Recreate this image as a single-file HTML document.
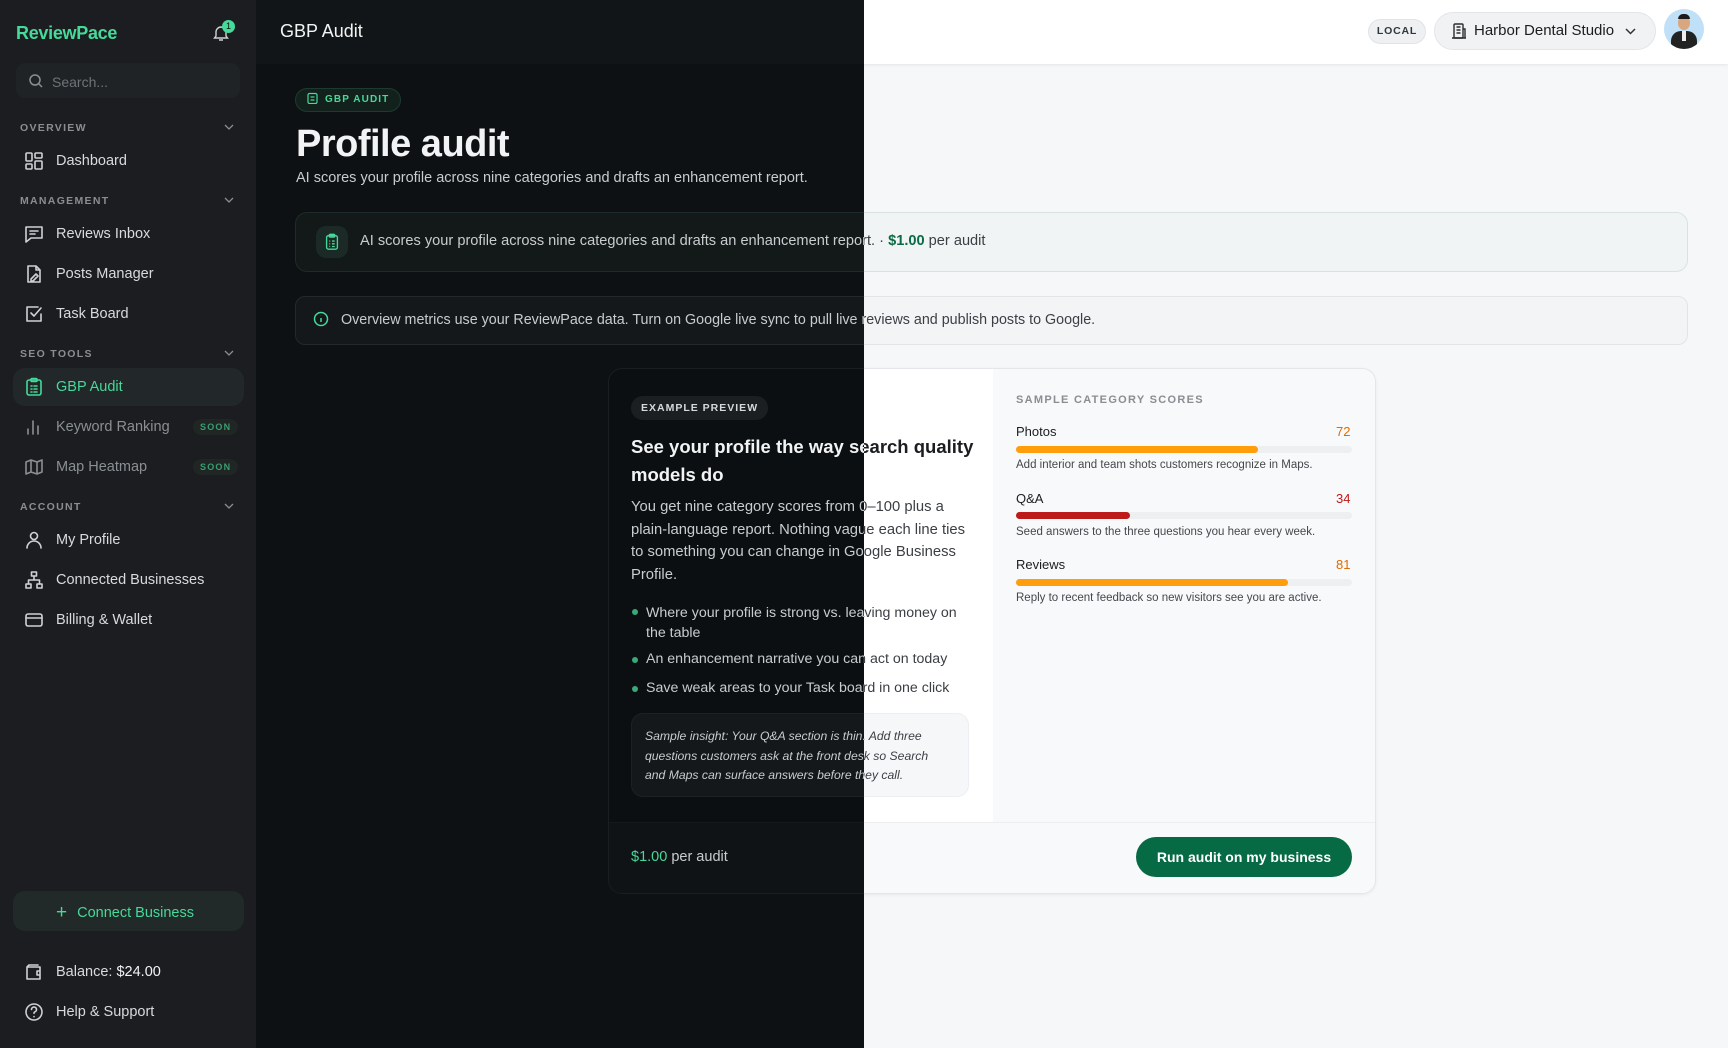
<!DOCTYPE html>
<html><head><meta charset="utf-8">
<style>
*{box-sizing:border-box;margin:0;padding:0}
html,body{width:1728px;height:1048px;overflow:hidden;font-family:"Liberation Sans",sans-serif}
.layer{position:absolute;left:0;top:0;width:1728px;height:1048px;overflow:hidden;background:var(--bg);color:var(--text)}
.light{--bg:#f6f7f9;--hdr:#ffffff;--text:#1b1d20;--muted:#3b3f44;--b1:#f1f4f4;--b1b:#d9e2e0;--b2:#f3f4f6;--b2b:#e2e5e8;--card:#ffffff;--cardb:#e4e6e9;--right:#f8f9fa;--foot:#f8f9fa;--green:#0b6b45;--pill:#eceef0;--ins:#f6f7f9;--track:#eeeff1;--icb:#e3efe9}
.dark{--bg:#0e1113;--hdr:#121517;--text:#f2f3f4;--muted:#c9ccce;--b1:#131819;--b1b:#1f2b28;--b2:#15181a;--b2b:#24282b;--card:#0c0f11;--cardb:#1a1e21;--right:#0c0f11;--foot:#101315;--green:#45d99a;--pill:#1c1f22;--ins:#15181b;--track:#222;--icb:#1b2a26;clip-path:inset(0 864px 0 0)}
.abs{position:absolute}
.hdr{left:256px;top:0;width:1472px;height:64px;background:var(--hdr);box-shadow:0 1px 3px rgba(0,0,0,.08)}
.side{left:0;top:0;width:256px;height:1048px;background:#1b1d20}
.nav{position:absolute;left:24px;display:flex;align-items:center;font-size:14.5px;color:#d8dadc;height:24px;width:230px}
.nav svg{width:20px;height:20px;margin-right:12px;fill:none;stroke:#cfd2d4;stroke-width:1.6;stroke-linecap:round;stroke-linejoin:round}
.sec{position:absolute;left:20px;font-size:10.5px;letter-spacing:1.3px;color:#8a8e92;font-weight:bold}
.chev{position:absolute;left:224px;width:10px;height:6px}
.soon{position:absolute;left:169px;font-size:9px;letter-spacing:1.2px;color:#3a9e74;background:#1f2623;border-radius:10px;padding:3px 7px;font-weight:bold}
.t{position:absolute;white-space:nowrap}
</style></head><body>

<!-- LIGHT LAYER -->
<div class="layer light">
 <div class="abs hdr"></div>
 <div class="t" style="left:1368px;top:19px;height:25px;width:58px;border-radius:13px;background:#eef0f2;border:1px solid #e1e3e6;font-size:10.5px;font-weight:bold;letter-spacing:.8px;color:#33373b;text-align:center;line-height:23px">LOCAL</div>
 <div class="t" style="left:1434px;top:12px;width:222px;height:38px;border-radius:19px;background:#f1f2f4;border:1px solid #e3e5e8"></div>
 <svg class="abs" style="left:1450px;top:22px" width="18" height="18" viewBox="0 0 18 18" fill="none" stroke="#2a2d31" stroke-width="1.4"><rect x="4" y="2" width="9" height="14" rx="1"/><path d="M2 16h14M6.5 5h4M6.5 8h4M6.5 11h4M13 7h2v9"/></svg>
 <div class="t" style="left:1474px;top:22px;font-size:15px;color:#1b1d20">Harbor Dental Studio</div>
 <svg class="abs" style="left:1625px;top:28px" width="11" height="7" viewBox="0 0 11 7" fill="none" stroke="#333" stroke-width="1.5"><path d="M1 1l4.5 4.5L10 1"/></svg>
 <div class="abs" style="left:1664px;top:9px;width:40px;height:40px;border-radius:50%;background:#bfe0f6;overflow:hidden">
  <div class="abs" style="left:14px;top:7px;width:12px;height:14px;border-radius:50%;background:#d9a77f"></div>
  <div class="abs" style="left:14px;top:5px;width:12px;height:5px;border-radius:5px 5px 0 0;background:#1c1c1c"></div>
  <div class="abs" style="left:7px;top:22px;width:26px;height:22px;border-radius:10px 10px 0 0;background:#222"></div>
  <div class="abs" style="left:18px;top:22px;width:4px;height:10px;background:#eee"></div>
 </div>

 <div class="abs" style="left:295px;top:212px;width:1393px;height:60px;border-radius:12px;background:var(--b1);border:1px solid var(--b1b)"></div>
 <div class="t" style="left:360px;top:233px;font-size:14.6px;color:var(--muted)">AI scores your profile across nine categories and drafts an enhancement report. · <b style="color:var(--green)">$1.00</b> per audit</div>
 <div class="abs" style="left:295px;top:296px;width:1393px;height:49px;border-radius:10px;background:var(--b2);border:1px solid var(--b2b)"></div>
 <div class="t" style="left:341px;top:312px;font-size:14.3px;color:var(--muted)">Overview metrics use your ReviewPace data. Turn on Google live sync to pull live reviews and publish posts to Google.</div>

 <div class="abs" style="left:608px;top:368px;width:768px;height:526px;border-radius:14px;background:var(--card);border:1px solid var(--cardb);box-shadow:0 1px 3px rgba(0,0,0,.06);overflow:hidden">
  <div class="abs" style="left:384px;top:0;width:384px;height:453px;background:var(--right)"></div>
  <div class="abs" style="left:0;top:453px;width:768px;height:73px;background:var(--foot);border-top:1px solid #eceef0"></div>
 </div>
 <div class="t" style="left:1016px;top:394px;font-size:11px;letter-spacing:1.3px;color:#8a8d91;font-weight:bold">SAMPLE CATEGORY SCORES</div>
 <div class="t" style="left:1016px;top:424px;font-size:13px;color:#1b1d20">Photos</div><div class="t" style="left:1336px;top:424px;font-size:13px;color:#e06a00">72</div>
 <div class="abs" style="left:1016px;top:446px;width:336px;height:7px;border-radius:4px;background:#eeeff1"><div style="width:72%;height:7px;border-radius:4px;background:#ff9d0a"></div></div>
 <div class="t" style="left:1016px;top:459px;font-size:11.5px;color:#44484c">Add interior and team shots customers recognize in Maps.</div>
 <div class="t" style="left:1016px;top:491px;font-size:13px;color:#1b1d20">Q&amp;A</div><div class="t" style="left:1336px;top:491px;font-size:13px;color:#c01a1a">34</div>
 <div class="abs" style="left:1016px;top:512px;width:336px;height:7px;border-radius:4px;background:#eeeff1"><div style="width:34%;height:7px;border-radius:4px;background:#bd1a1a"></div></div>
 <div class="t" style="left:1016px;top:526px;font-size:11.5px;color:#44484c">Seed answers to the three questions you hear every week.</div>
 <div class="t" style="left:1016px;top:557px;font-size:13px;color:#1b1d20">Reviews</div><div class="t" style="left:1336px;top:557px;font-size:13px;color:#e06a00">81</div>
 <div class="abs" style="left:1016px;top:579px;width:336px;height:7px;border-radius:4px;background:#eeeff1"><div style="width:81%;height:7px;border-radius:4px;background:#ff9d0a"></div></div>
 <div class="t" style="left:1016px;top:592px;font-size:11.5px;color:#44484c">Reply to recent feedback so new visitors see you are active.</div>

 <div class="t" style="left:1136px;top:837px;width:216px;height:40px;border-radius:20px;background:#066a45;color:#fff;font-size:14px;font-weight:bold;text-align:center;line-height:40px">Run audit on my business</div>

 <div class="t" style="left:631px;top:433px;font-size:18.5px;font-weight:bold;line-height:28px;color:var(--text)">See your profile the way search quality<br>models do</div>
 <div class="t" style="left:631px;top:496px;font-size:14.8px;line-height:22.5px;color:var(--muted)">You get nine category scores from 0–100 plus a<br>plain-language report. Nothing vague each line ties<br>to something you can change in Google Business<br>Profile.</div>
 <div class="t" style="left:646px;top:603px;font-size:14.2px;line-height:20px;color:var(--muted)">Where your profile is strong vs. leaving money on<br>the table</div>
 <div class="t" style="left:646px;top:651px;font-size:14.2px;color:var(--muted)">An enhancement narrative you can act on today</div>
 <div class="t" style="left:646px;top:680px;font-size:14.2px;color:var(--muted)">Save weak areas to your Task board in one click</div>
 <div class="abs" style="left:631px;top:713px;width:338px;height:84px;border-radius:12px;background:var(--ins);border:1px solid #eceef1"></div>
 <div class="t" style="left:645px;top:727px;font-size:12.2px;line-height:19.5px;font-style:italic;color:var(--muted)">Sample insight: Your Q&amp;A section is thin. Add three<br>questions customers ask at the front desk so Search<br>and Maps can surface answers before they call.</div>
</div>

<!-- DARK LAYER -->
<div class="layer dark">
 <div class="abs hdr" style="box-shadow:none"></div>
 <div class="t" style="left:280px;top:21px;font-size:18px;color:#f2f3f4">GBP Audit</div>

 <div class="abs side"></div>
 <div class="t" style="left:16px;top:23px;font-size:18px;font-weight:bold;color:#45d99a;letter-spacing:-.3px">ReviewPace</div>
 <svg class="abs" style="left:212px;top:24px" width="18" height="18" viewBox="0 0 18 18" fill="none" stroke="#cfd2d4" stroke-width="1.4"><path d="M4 12V8a5 5 0 0 1 10 0v4l1.5 2h-13z M7 16h4"/></svg>
 <div class="abs" style="left:222px;top:20px;width:13px;height:13px;border-radius:50%;background:#45d99a;color:#0e1113;font-size:9px;text-align:center;line-height:13px">1</div>
 <div class="abs" style="left:16px;top:63px;width:224px;height:35px;border-radius:9px;background:#202326"></div>
 <svg class="abs" style="left:28px;top:73px" width="16" height="16" viewBox="0 0 16 16" fill="none" stroke="#8a8e92" stroke-width="1.5"><circle cx="7" cy="7" r="5"/><path d="M11 11l3 3"/></svg>
 <div class="t" style="left:52px;top:74px;font-size:14px;color:#6e7377">Search...</div>

 <div class="sec" style="top:122px">OVERVIEW</div>
 <svg class="chev" style="top:124px" viewBox="0 0 10 6" fill="none" stroke="#8a8e92" stroke-width="1.3"><path d="M1 1l4 4 4-4"/></svg>
 <div class="nav" style="top:149px"><svg viewBox="0 0 20 20"><rect x="2" y="2" width="6" height="8" rx="1"/><rect x="11" y="2" width="7" height="5" rx="1"/><rect x="2" y="13" width="6" height="5" rx="1"/><rect x="11" y="10" width="7" height="8" rx="1"/></svg>Dashboard</div>
 <div class="sec" style="top:195px">MANAGEMENT</div>
 <svg class="chev" style="top:197px" viewBox="0 0 10 6" fill="none" stroke="#8a8e92" stroke-width="1.3"><path d="M1 1l4 4 4-4"/></svg>
 <div class="nav" style="top:222px"><svg viewBox="0 0 20 20"><path d="M2 3h16v11H7l-5 4z M6 7h8M6 10h5"/></svg>Reviews Inbox</div>
 <div class="nav" style="top:262px"><svg viewBox="0 0 20 20"><path d="M4 2h8l4 4v12H4z M12 2v4h4 M7 15l5-5 2 2-5 5H7z"/></svg>Posts Manager</div>
 <div class="nav" style="top:302px"><svg viewBox="0 0 20 20"><path d="M17 10v7H3V3h11 M7 9l3 3 7-8"/></svg>Task Board</div>
 <div class="sec" style="top:348px">SEO TOOLS</div>
 <svg class="chev" style="top:350px" viewBox="0 0 10 6" fill="none" stroke="#8a8e92" stroke-width="1.3"><path d="M1 1l4 4 4-4"/></svg>
 <div class="abs" style="left:13px;top:368px;width:231px;height:38px;border-radius:12px;background:#222729"></div>
 <div class="nav" style="top:375px;color:#45d99a"><svg viewBox="0 0 20 20" style="stroke:#45d99a"><rect x="3" y="3" width="14" height="15" rx="2"/><rect x="7" y="1.5" width="6" height="3" rx="1"/><path d="M7 9h1M10 9h3M7 12h1M10 12h3M7 15h1M10 15h3"/></svg>GBP Audit</div>
 <div class="nav" style="top:415px;color:#8b8f93"><svg viewBox="0 0 20 20" style="stroke:#8b8f93"><path d="M4 17v-5M9 17V4M14 17V9"/></svg>Keyword Ranking<span class="soon">SOON</span></div>
 <div class="nav" style="top:455px;color:#8b8f93"><svg viewBox="0 0 20 20" style="stroke:#8b8f93"><path d="M2 5l5-2 6 2 5-2v12l-5 2-6-2-5 2z M7 3v12M13 5v12"/></svg>Map Heatmap<span class="soon">SOON</span></div>
 <div class="sec" style="top:501px">ACCOUNT</div>
 <svg class="chev" style="top:503px" viewBox="0 0 10 6" fill="none" stroke="#8a8e92" stroke-width="1.3"><path d="M1 1l4 4 4-4"/></svg>
 <div class="nav" style="top:528px"><svg viewBox="0 0 20 20"><circle cx="10" cy="6" r="3.5"/><path d="M3 18a7 7 0 0 1 14 0"/></svg>My Profile</div>
 <div class="nav" style="top:568px"><svg viewBox="0 0 20 20"><rect x="7.5" y="2" width="5" height="4"/><rect x="2" y="14" width="5" height="4"/><rect x="13" y="14" width="5" height="4"/><path d="M10 6v4M4.5 14v-4h11v4"/></svg>Connected Businesses</div>
 <div class="nav" style="top:608px"><svg viewBox="0 0 20 20"><rect x="2" y="4" width="16" height="12" rx="2"/><path d="M2 8h16"/></svg>Billing &amp; Wallet</div>

 <div class="abs" style="left:13px;top:891px;width:231px;height:40px;border-radius:12px;background:#212a28"></div>
 <div class="t" style="left:56px;top:901px;font-size:14.5px;color:#45d99a"><span style="font-size:19px;margin-right:10px;position:relative;top:1px">+</span>Connect Business</div>
 <div class="nav" style="top:960px"><svg viewBox="0 0 20 20"><path d="M3 5h13v12H3z M3 5l2-2h9 M16 9h-3v4h3"/></svg>Balance:&nbsp;<b style="color:#f2f3f4;font-weight:normal">$24.00</b></div>
 <div class="nav" style="top:1000px"><svg viewBox="0 0 20 20"><circle cx="10" cy="10" r="8"/><path d="M7.5 7.5a2.5 2.5 0 1 1 3.5 2.3c-.7.3-1 .8-1 1.5M10 14.5v.2"/></svg>Help &amp; Support</div>

 <div class="t" style="left:295px;top:88px;height:24px;padding:0 11px;border-radius:12px;background:#13211d;border:1px solid #1d3a30;font-size:10px;font-weight:bold;letter-spacing:1.1px;color:#45d99a;line-height:22px"><svg width="11" height="12" viewBox="0 0 11 12" fill="none" stroke="#45d99a" stroke-width="1.2" style="vertical-align:-2px;margin-right:7px"><rect x="1" y="1.5" width="9" height="10" rx="1.5"/><path d="M3.5 5h4M3.5 8h4"/></svg>GBP AUDIT</div>
 <div class="t" style="left:296px;top:123px;font-size:38px;font-weight:bold;color:#f2f3f4;letter-spacing:-.5px">Profile audit</div>
 <div class="t" style="left:296px;top:170px;font-size:14.5px;color:#c9ccce">AI scores your profile across nine categories and drafts an enhancement report.</div>

 <div class="abs" style="left:295px;top:212px;width:1393px;height:60px;border-radius:12px;background:var(--b1);border:1px solid var(--b1b)"></div>
 <div class="abs" style="left:316px;top:226px;width:32px;height:32px;border-radius:10px;background:#1b2a26"></div>
 <svg class="abs" style="left:323px;top:233px" width="18" height="18" viewBox="0 0 20 20" fill="none" stroke="#45d99a" stroke-width="1.5"><rect x="4" y="3" width="12" height="15" rx="2"/><rect x="7" y="1.5" width="6" height="3" rx="1"/><path d="M7 9h1M10 9h3M7 12h1M10 12h3M7 15h1M10 15h3"/></svg>
 <div class="t" style="left:360px;top:233px;font-size:14.6px;color:var(--muted)">AI scores your profile across nine categories and drafts an enhancement report. · <b style="color:var(--green)">$1.00</b> per audit</div>
 <div class="abs" style="left:295px;top:296px;width:1393px;height:49px;border-radius:10px;background:var(--b2);border:1px solid var(--b2b)"></div>
 <svg class="abs" style="left:313px;top:311px" width="16" height="16" viewBox="0 0 16 16" fill="none" stroke="#45d99a" stroke-width="1.5"><circle cx="8" cy="8" r="6.5"/><path d="M8 7v4M8 4.6v.2"/></svg>
 <div class="t" style="left:341px;top:312px;font-size:14.3px;color:var(--muted)">Overview metrics use your ReviewPace data. Turn on Google live sync to pull live reviews and publish posts to Google.</div>

 <div class="abs" style="left:608px;top:368px;width:768px;height:526px;border-radius:14px;background:var(--card);border:1px solid var(--cardb);overflow:hidden">
  <div class="abs" style="left:0;top:453px;width:768px;height:73px;background:var(--foot);border-top:1px solid #16191c"></div>
 </div>
 <div class="t" style="left:631px;top:396px;height:24px;padding:0 10px;border-radius:12px;background:#1c1f22;font-size:10.5px;font-weight:bold;letter-spacing:1px;color:#d6d8da;line-height:24px">EXAMPLE PREVIEW</div>
 <div class="t" style="left:631px;top:433px;font-size:18.5px;font-weight:bold;line-height:28px;color:var(--text)">See your profile the way search quality<br>models do</div>
 <div class="t" style="left:631px;top:496px;font-size:14.8px;line-height:22.5px;color:var(--muted)">You get nine category scores from 0–100 plus a<br>plain-language report. Nothing vague each line ties<br>to something you can change in Google Business<br>Profile.</div>
 <div class="abs" style="left:632px;top:609px;width:6px;height:6px;border-radius:50%;background:#3aa877"></div>
 <div class="abs" style="left:632px;top:657px;width:6px;height:6px;border-radius:50%;background:#3aa877"></div>
 <div class="abs" style="left:632px;top:686px;width:6px;height:6px;border-radius:50%;background:#3aa877"></div>
 <div class="t" style="left:646px;top:603px;font-size:14.2px;line-height:20px;color:var(--muted)">Where your profile is strong vs. leaving money on<br>the table</div>
 <div class="t" style="left:646px;top:651px;font-size:14.2px;color:var(--muted)">An enhancement narrative you can act on today</div>
 <div class="t" style="left:646px;top:680px;font-size:14.2px;color:var(--muted)">Save weak areas to your Task board in one click</div>
 <div class="abs" style="left:631px;top:713px;width:338px;height:84px;border-radius:12px;background:var(--ins);border:1px solid #1d2124"></div>
 <div class="t" style="left:645px;top:727px;font-size:12.2px;line-height:19.5px;font-style:italic;color:var(--muted)">Sample insight: Your Q&amp;A section is thin. Add three<br>questions customers ask at the front desk so Search<br>and Maps can surface answers before they call.</div>
 <div class="t" style="left:631px;top:849px;font-size:14.5px;color:#c9ccce"><span style="color:#45d99a">$1.00</span> per audit</div>
</div>
</body></html>
